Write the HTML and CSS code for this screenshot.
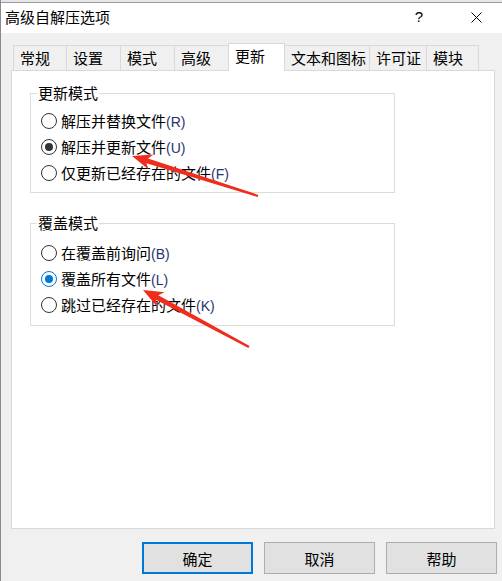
FILE: index.html
```html
<!DOCTYPE html>
<html lang="zh-CN">
<head>
<meta charset="utf-8">
<title>高级自解压选项</title>
<link rel="stylesheet" href="styles.css">
</head>
<body>
<div class="window">
  <div class="backdrop"></div>
  <header class="titlebar">
    <span class="title">高级自解压选项</span>
    <div class="controls">
      <span class="ctl ctl-help">?</span>
      <span class="ctl ctl-close"><svg width="11" height="11" viewBox="0 0 11 11"><path d="M0.5 0.5 L10.5 10.5 M10.5 0.5 L0.5 10.5" stroke="#000" stroke-width="1" fill="none"/></svg></span>
    </div>
  </header>
  <main class="content">
    <nav class="tabs">
      <div class="tab w53">常规</div>
      <div class="tab w54">设置</div>
      <div class="tab w54">模式</div>
      <div class="tab w54">高级</div>
      <div class="tab active w57">更新</div>
      <div class="tab w85">文本和图标</div>
      <div class="tab w57">许可证</div>
      <div class="tab w53 last">模块</div>
    </nav>
    <section class="panel">
      <fieldset class="group">
        <legend>更新模式</legend>
        <label class="opt"><span class="radio"></span><span class="txt">解压并替换文件<span class="key">(R)</span></span></label>
        <label class="opt"><span class="radio on-dark"></span><span class="txt">解压并更新文件<span class="key">(U)</span></span></label>
        <label class="opt"><span class="radio"></span><span class="txt">仅更新已经存在的文件<span class="key">(F)</span></span></label>
      </fieldset>
      <fieldset class="group group-second">
        <legend>覆盖模式</legend>
        <label class="opt"><span class="radio"></span><span class="txt">在覆盖前询问<span class="key">(B)</span></span></label>
        <label class="opt"><span class="radio on-blue"></span><span class="txt">覆盖所有文件<span class="key">(L)</span></span></label>
        <label class="opt"><span class="radio"></span><span class="txt">跳过已经存在的文件<span class="key">(K)</span></span></label>
      </fieldset>
    </section>
    <div class="buttons">
      <button class="btn btn-default">确定</button>
      <button class="btn">取消</button>
      <button class="btn">帮助</button>
    </div>
  </main>
  <svg class="annot" width="502" height="581" viewBox="0 0 502 581">
    <polygon fill="#f02c1c" points="131,156 152.5,154.4 147.0,158.4 257.4,194.9 256.6,197.1 145.4,163.2 147.6,169.6"/>
    <polygon fill="#f02c1c" points="142,290 163.5,292.3 157.3,295.3 248.6,345.9 247.4,348.1 154.9,299.7 155.9,306.5"/>
  </svg>
</div>
</body>
</html>
```

FILE: styles.css
```css
* { box-sizing: border-box; }
html, body { margin: 0; padding: 0; }
body {
  background: #f0f0f0;
  font-family: "Noto Sans CJK SC", "Noto Sans", sans-serif;
  font-size: 15px;
  color: #000;
}
.window {
  position: relative;
  width: 502px;
  height: 581px;
  display: flex;
  flex-direction: column;
  border-left: 1px solid #8a8a8a;
  background: #f0f0f0;
  overflow: hidden;
}
.backdrop {
  height: 3px;
  background: #e6e6e6;
  border-bottom: 1px solid #9a9a9a;
  flex: none;
}
.titlebar {
  height: 30px;
  flex: none;
  background: #fff;
  display: flex;
  align-items: center;
  justify-content: space-between;
  padding-left: 4px;
  padding-bottom: 3px;
}
.title { font-size: 15px; line-height: 18px; }
.controls { display: flex; align-items: center; height: 100%; }
.ctl {
  display: flex;
  align-items: center;
  justify-content: center;
  height: 100%;
}
.ctl-help {
  width: 62px;
  font-family: "Liberation Sans", sans-serif;
  font-size: 15px;
}
.ctl-close { width: 52px; padding-top: 2px; }

.content {
  flex: 1;
  display: flex;
  flex-direction: column;
  padding: 10px 7px 7px 10px;
}
.tabs {
  display: flex;
  align-items: flex-end;
  height: 27px;
  padding-left: 2px;
  position: relative;
  z-index: 2;
  flex: none;
}
.tab {
  flex: none;
  height: 25px;
  border-top: 1px solid #d9d9d9;
  border-left: 1px solid #d9d9d9;
  background: #f0f0f0;
  padding: 3px 0 0 6px;
  font-size: 15px;
  line-height: 18px;
  white-space: nowrap;
}
.tab.last { border-right: 1px solid #d9d9d9; }
.tab.active {
  height: 28px;
  background: #fff;
  border-right: 1px solid #d9d9d9;
  margin-right: -1px;
  margin-bottom: -1px;
  position: relative;
  z-index: 3;
}
.w53 { width: 53px; }
.w54 { width: 54px; }
.w57 { width: 57px; }
.w85 { width: 85px; }

.panel {
  flex: 1;
  background: #fff;
  border: 1px solid #d9d9d9;
  display: flex;
  flex-direction: column;
  align-items: flex-start;
}
.group {
  width: 365px;
  margin: 13px 0 0 18px;
  padding: 6px 0 6px 0;
  border: 1px solid #dcdcdc;
  min-width: 0;
}
.group-second { margin-top: 21px; padding-top: 8px; padding-bottom: 7px; }
.group legend {
  margin-left: 6px;
  padding: 0 1px;
  font-size: 15px;
  line-height: 18px;
}
.opt {
  display: flex;
  align-items: center;
  height: 26px;
  padding-left: 10px;
}
.radio {
  width: 16px;
  height: 16px;
  border: 1px solid #333;
  border-radius: 50%;
  background: #fff;
  margin-right: 4px;
  display: flex;
  align-items: center;
  justify-content: center;
  flex: none;
}
.radio.on-dark::after,
.radio.on-blue::after {
  content: "";
  width: 8px;
  height: 8px;
  border-radius: 50%;
  background: #333;
}
.radio.on-blue { border-color: #0078d7; }
.radio.on-blue::after { background: #0078d7; }
.txt { font-size: 15px; line-height: 18px; white-space: nowrap; }
.key {
  font-family: "Liberation Sans", sans-serif;
  font-size: 14px;
  color: #1f3470;
}

.buttons {
  display: flex;
  justify-content: flex-end;
  gap: 11px;
  margin-top: 13px;
  margin-right: -2px;
  flex: none;
}
.btn {
  width: 111px;
  height: 32px;
  background: #e1e1e1;
  border: 1px solid #adadad;
  font-family: "Noto Sans CJK SC", sans-serif;
  font-size: 15px;
  color: #000;
  padding: 0;
  border-radius: 0;
}
.btn-default { border: 2px solid #0078d7; }

.annot {
  position: absolute;
  top: 0;
  left: 0;
  pointer-events: none;
  z-index: 10;
}
```
